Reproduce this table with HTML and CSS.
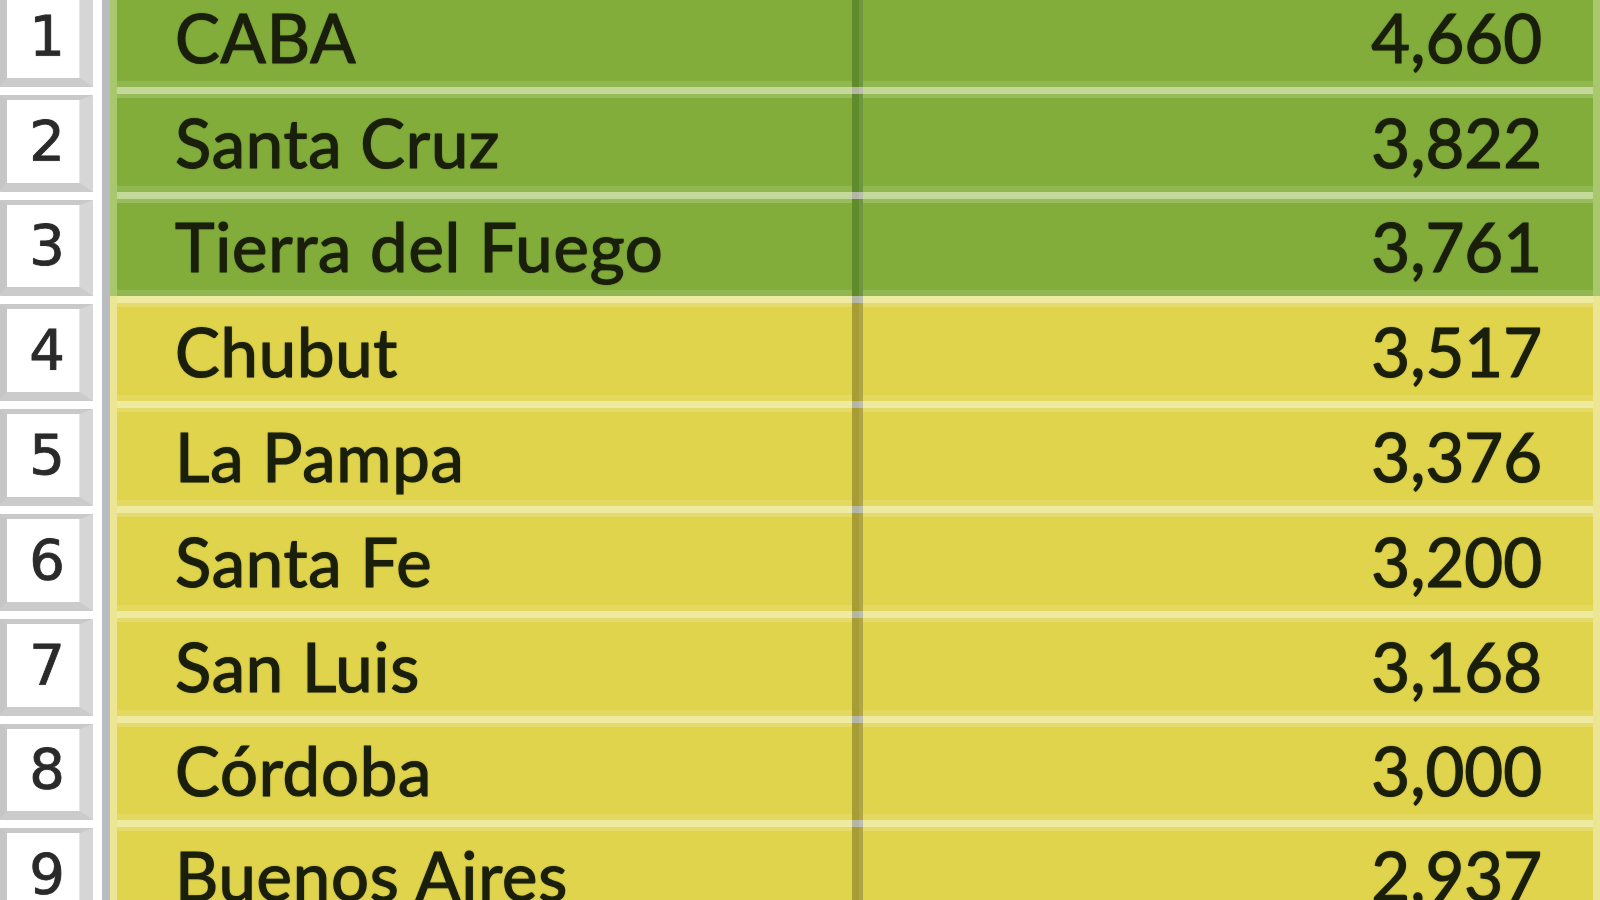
FILE: index.html
```html
<!DOCTYPE html>
<html lang="es">
<head>
<meta charset="utf-8">
<title>Provincias</title>
<link rel="stylesheet" href="styles.css">
</head>
<body>
<div class="sheet">
  <div class="row green"><div class="hdr"><div class="box">1</div></div><div class="vline"></div><div class="cells"><div class="strip"></div><div class="name">CABA</div><div class="divider"></div><div class="val">4,660</div><div class="strip"></div></div></div>
  <div class="row green"><div class="hdr"><div class="box">2</div></div><div class="vline"></div><div class="cells"><div class="strip"></div><div class="name">Santa Cruz</div><div class="divider"></div><div class="val">3,822</div><div class="strip"></div></div></div>
  <div class="row green"><div class="hdr"><div class="box">3</div></div><div class="vline"></div><div class="cells"><div class="strip"></div><div class="name">Tierra del Fuego</div><div class="divider"></div><div class="val">3,761</div><div class="strip"></div></div></div>
  <div class="row yellow"><div class="hdr"><div class="box">4</div></div><div class="vline"></div><div class="cells"><div class="strip"></div><div class="name">Chubut</div><div class="divider"></div><div class="val">3,517</div><div class="strip"></div></div></div>
  <div class="row yellow"><div class="hdr"><div class="box">5</div></div><div class="vline"></div><div class="cells"><div class="strip"></div><div class="name">La Pampa</div><div class="divider"></div><div class="val">3,376</div><div class="strip"></div></div></div>
  <div class="row yellow"><div class="hdr"><div class="box">6</div></div><div class="vline"></div><div class="cells"><div class="strip"></div><div class="name">Santa Fe</div><div class="divider"></div><div class="val">3,200</div><div class="strip"></div></div></div>
  <div class="row yellow"><div class="hdr"><div class="box">7</div></div><div class="vline"></div><div class="cells"><div class="strip"></div><div class="name">San Luis</div><div class="divider"></div><div class="val">3,168</div><div class="strip"></div></div></div>
  <div class="row yellow"><div class="hdr"><div class="box">8</div></div><div class="vline"></div><div class="cells"><div class="strip"></div><div class="name">Córdoba</div><div class="divider"></div><div class="val">3,000</div><div class="strip"></div></div></div>
  <div class="row yellow"><div class="hdr"><div class="box">9</div></div><div class="vline"></div><div class="cells"><div class="strip"></div><div class="name">Buenos Aires</div><div class="divider"></div><div class="val">2,937</div><div class="strip"></div></div></div>
</div>
</body>
</html>
```

FILE: styles.css
```css
html, body {
  margin: 0;
  padding: 0;
  background: #ffffff;
  width: 1600px;
  height: 900px;
  overflow: hidden;
}

.sheet {
  margin-top: -18px;
  display: flex;
  flex-direction: column;
}

.row {
  height: 104.8px;
  display: flex;
  flex-shrink: 0;
}

.green {
  --cell: #82ad3a;
  --line: #c3d899;
  --div: #5f8b2b;
  --strip: #a9c86e;
}

.yellow {
  --cell: #e0d44c;
  --line: #eeea9f;
  --div: #a89c34;
  --strip: #ebe594;
}

.hdr {
  width: 102px;
  flex-shrink: 0;
  padding-top: 8px;
  box-sizing: border-box;
  background: #ffffff;
  display: flex;
}

.box {
  flex: 1;
  box-sizing: border-box;
  margin-left: -2px;
  margin-right: 9px;
  background: #ffffff;
  border-top: 5px solid #c9c9c9;
  border-left: 9px solid #c6c6c6;
  border-right: 13px solid #d6d6d6;
  border-bottom: 9px solid #cbcbcb;
  box-shadow: inset -1px 0 0 #e6e6e6;
  display: flex;
  align-items: center;
  justify-content: center;
  font-family: "DejaVu Sans", sans-serif;
  font-size: 56px;
  color: #2a2a2a;
  -webkit-text-stroke: 0.8px #2a2a2a;
  text-shadow: 0 0 1.5px rgba(0, 0, 0, 0.4);
  padding-left: 7px;
  padding-bottom: 2px;
}

.vline {
  width: 8px;
  flex-shrink: 0;
  background: #b9bdc2;
}

.cells {
  flex: 1;
  display: flex;
}

.strip {
  width: 7px;
  flex-shrink: 0;
  background: var(--strip);
}

.name, .val {
  box-sizing: border-box;
  background: var(--cell);
  border-top: 7px solid var(--line);
  box-shadow: inset 0 4px 0 rgba(255, 255, 255, 0.18), inset 0 -6px 0 rgba(255, 255, 255, 0.12);
  display: flex;
  align-items: center;
  font-family: "Lato", "Open Sans", sans-serif;
  font-size: 67px;
  color: #1a1f0c;
  -webkit-text-stroke: 1.2px #1a1f0c;
  text-shadow: 0 0 2px rgba(20, 25, 5, 0.6);
  white-space: nowrap;
  padding-bottom: 2px;
}

.name {
  width: 735px;
  flex-shrink: 0;
  padding-left: 58px;
  letter-spacing: 0.8px;
}

.val {
  flex: 1;
  justify-content: flex-end;
  padding-right: 51px;
}

.divider {
  width: 11px;
  flex-shrink: 0;
  background: linear-gradient(to bottom, #b4b6a4 0, #b4b6a4 7px, var(--div) 7px);
  box-shadow: inset -4px 0 0 rgba(255, 255, 255, 0.1);
}
```
